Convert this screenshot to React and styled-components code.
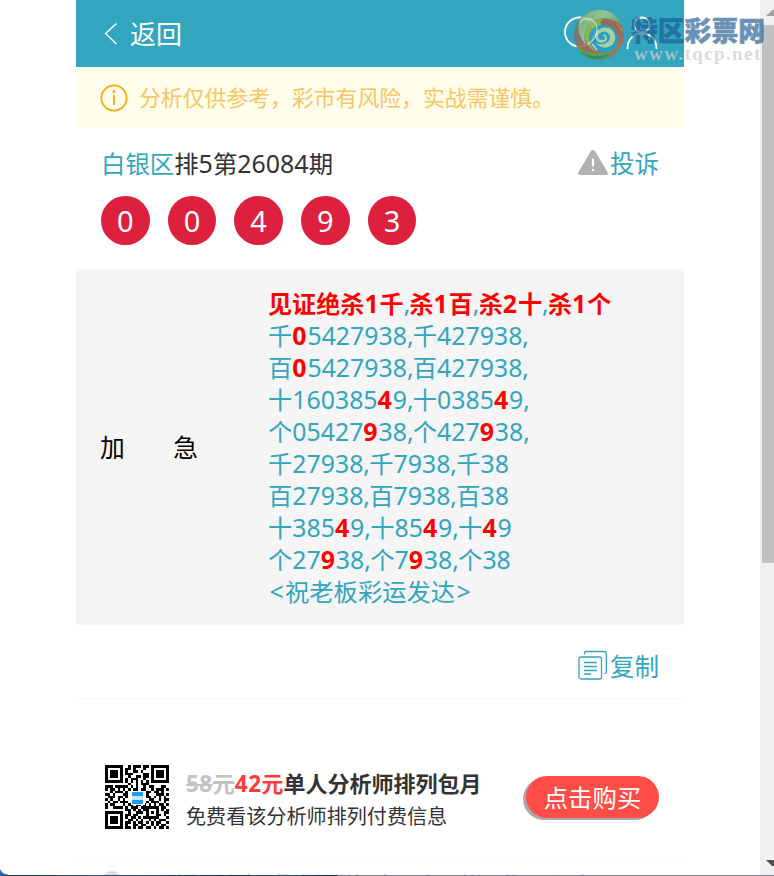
import React from 'react';
import styled, { createGlobalStyle } from 'styled-components';

const GlobalStyle = createGlobalStyle`
  * {
    box-sizing: border-box;
  }

  body {
    margin: 0;
    overflow: hidden;
    font-family: 'Noto Sans CJK SC', sans-serif;
    color: #333;
    background: #fff;
  }
`;

const balls = ['0', '0', '4', '9', '3'];

// *...* marks the winning part of a line
const lines = [
    '*见证绝杀1千*,*杀1百*,*杀2十*,*杀1个*',
    '千*0*5427938,千427938,',
    '百*0*5427938,百427938,',
    '十160385*4*9,十0385*4*9,',
    '个05427*9*38,个427*9*38,',
    '千27938,千7938,千38',
    '百27938,百7938,百38',
    '十385*4*9,十85*4*9,十*4*9',
    '个27*9*38,个7*9*38,个38',
    '<祝老板彩运发达>',
];

const qrRows = [
    '1111111001011101101111111',
    '1000001011010001001000001',
    '1011101010011010001011101',
    '1011101011100001101011101',
    '1011101001001101101011101',
    '1000001010111001001000001',
    '1111111010101010101111111',
    '0000000001001011100000000',
    '1110111110101001011000110',
    '1011010101011011001011101',
    '0010111010000000110110100',
    '1101000110000000100011101',
    '0111011010000000110101010',
    '1010010100000000011001011',
    '0101101110000000101110010',
    '1011000101101101010101101',
    '1001111010111011111110110',
    '0000000011010101100010101',
    '1111111001001110101010011',
    '1000001011011000100011010',
    '1011101010110101111110001',
    '1011101001101010010101110',
    '1011101011010110101011001',
    '1000001010011011001010110',
    '1111111011010110110101101',
];

function Mixed({ children }) {
    return children.split(/([0-9]+|[,<>])/).map((part, i) => {
        if (part === ',') return <Comma key={i}>,</Comma>;
        if (part === '<' || part === '>') return <Bracket key={i}>{part}</Bracket>;
        return i % 2 ? <Latin key={i}>{part}</Latin> : part;
    });
}

function Line({ text }) {
    return (
        <TextLine>
            {text.split('*').map((part, i) =>
                i % 2 ? <Hit key={i}><Mixed>{part}</Mixed></Hit> : <Mixed key={i}>{part}</Mixed>
            )}
        </TextLine>
    );
}

function QrCode() {
    return (
        <QrSvg viewBox="0 0 25 25" shapeRendering="crispEdges">
            {qrRows.map((row, y) =>
                row.split('').map((cell, x) =>
                    cell === '1' ? <rect key={`${x}-${y}`} x={x} y={y} width="1" height="1" fill="#000" /> : null
                )
            )}
            <rect x="10" y="10" width="5.500" height="5.500" fill="#fff" />
            <rect x="10.500" y="10.500" width="4.500" height="4.700" rx="0.500" fill="#1b9ff0" />
            <rect x="10.500" y="12" width="4.500" height="1.500" fill="#bfe6fb" />
        </QrSvg>
    );
}

function Watermark() {
    return (
        <Mark>
            <svg width="54" height="54" viewBox="0 0 54 54">
                <defs>
                    <linearGradient id="rim" x1="0" y1="0" x2="1" y2="0.6">
                        <stop offset="0" stopColor="#6fae6a" />
                        <stop offset="0.5" stopColor="#a3c79a" />
                        <stop offset="1" stopColor="#4f9f5a" />
                    </linearGradient>
                    <linearGradient id="flame" x1="0" y1="0" x2="1" y2="1">
                        <stop offset="0" stopColor="#6b7f6c" />
                        <stop offset="0.5" stopColor="#a3665a" />
                        <stop offset="1" stopColor="#b0705a" />
                    </linearGradient>
                </defs>
                <g opacity="0.88">
                    <circle cx="27" cy="27" r="25" fill="url(#flame)" />
                    <path d="M9 10C23-4 44 1 50 17C40 9 28 8 19 14C12 20 11 30 14 37C6 28 4 18 9 10Z" fill="url(#rim)" />
                    <path d="M17 16C28 7 44 11 51 23C41 18 30 15 21 21C14 28 17 38 25 44C12 39 9 25 17 16Z" fill="#8cba4a" />
                    <path d="M32 11C43 12 51 20 51 31C46 24 39 20 31 18C27 16 28 12 32 11Z" fill="#a8604f" />
                    <path d="M4 37C14 47 33 49 45 36C41 49 28 56 16 50C10 47 6 43 4 37Z" fill="#6f9b3d" />
                    <path d="M8 43C18 50 31 49 39 45C32 53 18 54 8 43Z" fill="#1f8f6d" />
                    <path d="M20 21C30 13 43 17 46 29C47 39 39 46 30 44C20 42 15 31 20 21Z" fill="#269fc4" />
                    <path d="M28 21C37 16 45 24 43 32C40 41 29 42 24 35C30 38 37 35 38 30C38 25 33 22 28 25C24 28 27 33 31 32C34 31 34 28 31 28C31 25 36 27 35 31C33 36 26 36 24 31C22 27 24 23 28 21Z" fill="#b9d69b" />
                </g>
                <path d="M8 15C11 9 20 9 24 17C27 24 22 33 16 36M20 36L25 42" fill="none" stroke="#fff" strokeWidth="1.300" opacity="0.550" />
            </svg>
            <MarkText>
                <MarkName>特区彩票网</MarkName>
                <MarkUrl>www.tqcp.net</MarkUrl>
            </MarkText>
        </Mark>
    );
}

export default function App() {
    return (
        <Screen>
            <GlobalStyle />
            <Page>
                <Header>
                    <Back>
                        <svg width="14" height="24" viewBox="0 0 14 24" fill="none" stroke="#fff" strokeWidth="1.500">
                            <path d="M12.500 1.500L1.500 11.500L12.500 22" />
                        </svg>
                        <span>返回</span>
                    </Back>
                    <HeaderIcons>
                        <svg width="36" height="38" viewBox="0 0 36 38" fill="none" stroke="#fff" strokeWidth="1.800">
                            <circle cx="15.500" cy="16" r="14.500" />
                            <path d="M25.500 26L33.500 34" />
                        </svg>
                        <svg width="32" height="38" viewBox="0 0 32 38" fill="none" stroke="#fff" strokeWidth="1.800">
                            <circle cx="16" cy="9" r="7.500" />
                            <path d="M1.500 33C1.500 12 30.500 12 30.500 33" />
                        </svg>
                    </HeaderIcons>
                </Header>
                <Notice>
                    <svg width="28" height="28" viewBox="0 0 28 28" fill="none" stroke="#ffa411" strokeWidth="1.800">
                        <circle cx="14" cy="14" r="12.600" />
                        <path d="M14 11V21" />
                        <circle cx="14" cy="7.500" r="1.500" fill="#ffa411" stroke="none" />
                    </svg>
                    <span>分析仅供参考，彩市有风险，实战需谨慎。</span>
                </Notice>
                <Issue>
                    <div>
                        <Area>白银区</Area>
                        <Mixed>排5第26084期</Mixed>
                    </div>
                    <Action>
                        <svg width="30" height="27" viewBox="0 0 30 27">
                            <path d="M13.200 1.800Q15 0 16.800 1.800L29.500 23Q30.500 26 28 26H2Q-.5 26 .5 23Z" fill="#b1b1b1" />
                            <path d="M15 9.500V17.500M15 20V22" stroke="#fff" strokeWidth="2.200" />
                        </svg>
                        投诉
                    </Action>
                </Issue>
                <Balls>
                    {balls.map((n, i) => (
                        <Ball key={i}>{n}</Ball>
                    ))}
                </Balls>
                <Plan>
                    <PlanName>
                        <span>加</span>
                        <span>急</span>
                    </PlanName>
                    <div>
                        {lines.map((text) => (
                            <Line key={text} text={text} />
                        ))}
                    </div>
                </Plan>
                <CopyRow>
                    <Action>
                        <svg width="30" height="30" viewBox="0 0 30 30" fill="none" stroke="#32a5bf" strokeWidth="1.300">
                            <path d="M6.500 4.500V3Q6.500 1.500 8 1.500H26Q28.300 1.500 28.300 3.800V22Q28.300 23.500 26.500 23.500" />
                            <rect x="1" y="7" width="22.500" height="22" rx="2" />
                            <path d="M6 12.500H19M6 16.500H19M6 20.500H19M6 24H13" strokeWidth="1.600" />
                        </svg>
                        复制
                    </Action>
                </CopyRow>
                <Offer>
                    <QrCode />
                    <OfferText>
                        <OfferTitle>
                            <OldPrice><Mixed>58元</Mixed></OldPrice>
                            <Price><Mixed>42元</Mixed></Price>
                            单人分析师排列包月
                        </OfferTitle>
                        <OfferNote>免费看该分析师排列付费信息</OfferNote>
                    </OfferText>
                    <Buy>点击购买</Buy>
                </Offer>
                <Tips>
                    <Dot />
                    <span>凡中仅供参考，投注需谨慎，如需助到对待价格不到三个</span>
                </Tips>
            </Page>
            <Scrollbar>
                <Arrow />
                <Thumb />
                <Arrow $down />
            </Scrollbar>
            <Watermark />
            <Corner />
            <BottomEdge />
        </Screen>
    );
}

const Screen = styled.div`
  position: relative;
  display: flex;
  width: 774px;
  height: 876px;
  overflow: hidden;
`;

const Page = styled.main`
  width: 608px;
  height: 876px;
  margin: 0 76px;
  flex-shrink: 0;
  overflow: hidden;
`;

const Header = styled.header`
  display: flex;
  justify-content: space-between;
  height: 67px;
  padding: 0 26px 0 28px;
  background: #32a5bf;
  color: #fff;
`;

const Back = styled.div`
  display: flex;
  align-items: center;
  gap: 13px;
  font-size: 26px;

  span {
    margin: -3px 0 0 -1px;
  }
`;

const HeaderIcons = styled.div`
  display: flex;
  gap: 26px;
  padding-top: 16px;
`;

const Notice = styled.div`
  display: flex;
  align-items: center;
  gap: 11px;
  height: 61px;
  padding-left: 24px;
  background: #fffeea;
  color: #f9c567;
  font-size: 21.850px;
  white-space: nowrap;

  span {
    margin-top: -2px;
  }
`;

const Issue = styled.div`
  display: flex;
  align-items: center;
  justify-content: space-between;
  height: 68px;
  padding: 0 25px 0;
  font-size: 24.400px;
`;

const Latin = styled.span`
  font-family: 'Noto Sans', sans-serif;
  font-size: 1.023em;
  line-height: 1;
`;

const Comma = styled(Latin)`
  letter-spacing: -0.800px;
`;

const Bracket = styled(Latin)`
  display: inline-block;
  width: 17px;
  text-align: center;
`;

const Area = styled.span`
  color: #32a5bf;
`;

const Action = styled.div`
  display: flex;
  align-items: center;
  gap: 2px;
  color: #32a5bf;
  font-size: 24.500px;
`;

const Balls = styled.div`
  display: flex;
  gap: 18.200px;
  height: 73px;
  padding-left: 25px;
`;

const Ball = styled.div`
  display: flex;
  align-items: center;
  justify-content: center;
  width: 48.500px;
  height: 49px;
  border-radius: 50%;
  background: #dc203e;
  color: #fff;
  font-family: 'Noto Sans', sans-serif;
  font-size: 29px;
`;

const Plan = styled.section`
  display: flex;
  align-items: center;
  height: 356px;
  padding-left: 24px;
  background: #f5f5f5;
  font-size: 24.300px;
`;

const PlanName = styled.div`
  display: flex;
  justify-content: space-between;
  width: 98px;
  margin-right: 70px;
  padding-bottom: 3px;
  color: #000;
  font-size: 24.800px;
`;

const TextLine = styled.div`
  height: 32px;
  line-height: 32px;
  color: #32a5bf;
  white-space: nowrap;

  &:first-child {
    margin-top: -1px;
  }
`;

const Hit = styled.b`
  color: #f00;
  font-size: 24.100px;

  ${Latin} {
    font-size: 24.900px;
    letter-spacing: 0.900px;
  }
`;

const CopyRow = styled.div`
  display: flex;
  justify-content: flex-end;
  height: 74px;
  padding: 7px 25px 0 0;
  border-bottom: 1px solid #f8f8f8;
`;

const Offer = styled.section`
  display: flex;
  align-items: center;
  height: 160px;
  padding: 37px 25px 0 29px;
  border-bottom: 1px solid #fafafa;
`;

const QrSvg = styled.svg`
  width: 64px;
  height: 64px;
  margin-right: 17px;
`;

const OfferText = styled.div`
  flex: 1;
  padding-top: 3px;
  white-space: nowrap;
`;

const OfferTitle = styled.div`
  font-size: 22px;
  font-weight: bold;
  line-height: 34px;

  ${Latin} {
    letter-spacing: 0.500px;
  }
`;

const OldPrice = styled.s`
  color: #c3c3c3;
`;

const Price = styled.span`
  color: #ff3b3b;
`;

const OfferNote = styled.div`
  font-size: 20.100px;
  line-height: 34px;
`;

const Buy = styled.button`
  width: 133px;
  height: 42px;
  padding: 0;
  border: 0;
  border-radius: 21px;
  background: #ff4d47;
  box-shadow: -3px 2px 0 #aaa;
  color: #fff;
  font-family: inherit;
  font-size: 24.400px;
  line-height: 42px;
`;

const Tips = styled.div`
  display: flex;
  gap: 31px;
  padding: 12px 0 0 26px;
  color: #aaa;
  font-size: 17.500px;
  line-height: 21px;
  white-space: nowrap;
`;

const Dot = styled.span`
  width: 20px;
  height: 20px;
  border-radius: 50%;
  background: #ddd;
`;

const Scrollbar = styled.div`
  display: flex;
  flex-direction: column;
  align-items: flex-end;
  justify-content: space-between;
  width: 14px;
  flex-shrink: 0;
  background: #f0f0f0;
`;

const Arrow = styled.div`
  width: 8px;
  height: 6px;
  margin: ${props => (props.$down ? '0 0 10px' : '10px 0 9px')};
  background: ${props => (props.$down ? '#505050' : '#a3a3a3')};
  clip-path: ${props => (props.$down ? 'polygon(0 0, 100% 0, 100% 100%, 75% 100%)' : 'polygon(0 100%, 75% 0, 100% 0, 100% 100%)')};
`;

const Thumb = styled.div`
  width: 12px;
  height: 538px;
  margin-bottom: auto;
  background: #c1c1c1;
`;

const Mark = styled.div`
  position: absolute;
  top: 8px;
  left: 572px;
  display: flex;
  gap: 5px;
`;

const MarkText = styled.div`
  padding-top: 5px;
  white-space: nowrap;
`;

const MarkName = styled.div`
  color: #1b5992;
  opacity: 0.650;
  -webkit-text-stroke: 0.500px #1b5992;
  font-size: 26.800px;
  font-weight: 900;
  line-height: 34px;
`;

const MarkUrl = styled.div`
  padding-left: 3px;
  color: rgba(205, 205, 205, 0.720);
  font-family: 'Liberation Serif', serif;
  font-size: 19px;
  font-weight: bold;
  letter-spacing: 1.400px;
  line-height: 14px;
`;

const Corner = styled.div`
  position: absolute;
  left: 0;
  bottom: 0;
  width: 8px;
  height: 10px;
  background: radial-gradient(circle at 100% 0, transparent 8px, #2462b5 9px);
`;

const BottomEdge = styled.div`
  position: absolute;
  left: 5px;
  right: 0;
  bottom: 0;
  height: 1px;
  background: linear-gradient(90deg, #263453 0, #305495 100px, #263453 220px, #2b4b80 290px, #252a38 330px, #7d8491 335px, #7d8491 100%);
`;
